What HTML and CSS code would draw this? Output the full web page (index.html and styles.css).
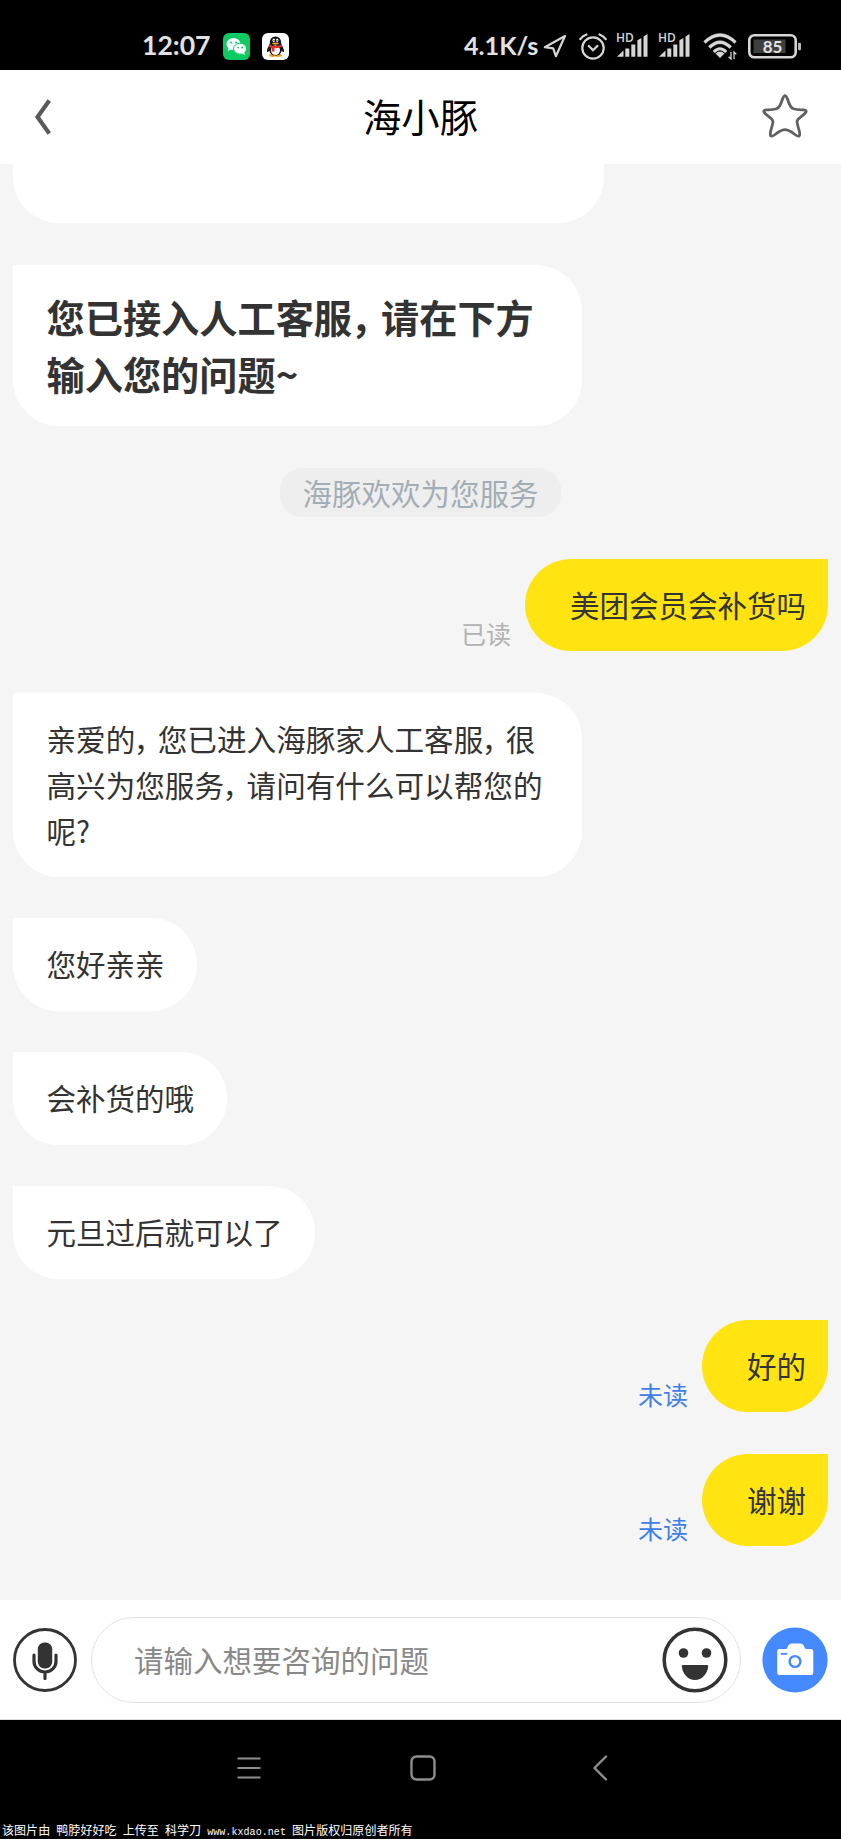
FILE: index.html
```html
<!DOCTYPE html>
<html lang="zh-CN">
<head>
<meta charset="utf-8">
<title>海小豚</title>
<link rel="stylesheet" href="styles.css">
</head>
<body>
<div class="phone">
  <div class="status">
    <span class="time">12:07</span>
    <svg class="app wechat" width="27" height="27" viewBox="0 0 27 27">
      <rect width="27" height="27" rx="6" fill="#0ccb62"/>
      <ellipse cx="10.500" cy="11" rx="7" ry="6" fill="#fff"/><path d="M5.500 14l-.5 4 4-2z" fill="#fff"/>
      <ellipse cx="17" cy="15.700" rx="6.500" ry="5.500" fill="#fff" stroke="#0ccb62"/><path d="M18 20l3.800 2-.6-3.500z" fill="#fff"/>
      <g fill="#0ccb62"><circle cx="8" cy="9.500" r="1"/><circle cx="13" cy="9.500" r="1"/><circle cx="15" cy="14.500" r=".9"/><circle cx="19.200" cy="14.500" r=".9"/></g>
    </svg>
    <svg class="app qq" width="27" height="27" viewBox="0 0 27 27">
      <rect width="27" height="27" rx="6" fill="#fff"/>
      <ellipse cx="10.500" cy="22.500" rx="3.500" ry="1.400" fill="#f0a51e"/><ellipse cx="16.500" cy="22.500" rx="3.500" ry="1.400" fill="#f0a51e"/>
      <path d="M13.500 3.500c-4 0-5.800 3-5.600 6.500 0 1.500-3.200 5.500-2.900 8.500.3 1.500 1.800-.3 2.300-1 .5 3 2.700 5 6.200 5s5.700-2 6.200-5c.5.700 2 2.500 2.300 1 .3-3-2.900-7-2.900-8.500.2-3.500-1.600-6.500-5.600-6.500z" fill="#161313"/>
      <ellipse cx="13.500" cy="17.300" rx="4.500" ry="4.800" fill="#fff"/>
      <path d="M7.500 11.500q6 3 12 0l.6 2.200q-3.500 1.800-7.600 1.600v3.200H9.800v-3.600l-3-1.200z" fill="#df3030"/>
      <ellipse cx="11.800" cy="7.300" rx="1.200" ry="1.700" fill="#fff"/><ellipse cx="15.200" cy="7.300" rx="1.200" ry="1.700" fill="#fff"/>
      <circle cx="12" cy="7.500" r=".6"/><circle cx="15" cy="7.500" r=".6"/><ellipse cx="13.500" cy="10.400" rx="3.300" ry="1" fill="#f0a51e"/>
    </svg>
    <span class="speed">4.1K/s</span>
    <svg class="ic loc" width="24" height="24" viewBox="0 0 24 24"><path d="M22 2L1.800 13.200l8.400 1.200 2.700 7.800z" fill="none" stroke="#d6d6d6" stroke-width="2.200" stroke-linejoin="round"/></svg>
    <svg class="ic alarm" width="28" height="27" viewBox="0 0 28 27"><g fill="none" stroke="#d6d6d6" stroke-width="2.200" stroke-linecap="round"><circle cx="14" cy="15" r="10.700"/><path d="M9.800 13l4.200 4.200 4.400-4.200M1.300 6.200Q3.600 2.800 7.500 1.500M26.700 6.200Q24.400 2.800 20.500 1.500"/></g></svg>
    <svg class="ic signal" width="34" height="28" viewBox="-1 -4 34 28"><text class="hd" x="0" y="9">HD</text><g fill="#d6d6d6"><path d="M1 23.700L7.500 17.500v6.200zM9.300 15.500h4v8.200h-4zM15.300 11.500h4v12.200h-4zM21.400 7.300l4-2.300v18.700h-4zM27.500 3.500l4-2.500v22.700h-4z"/></g></svg>
    <svg class="ic signal" width="34" height="28" viewBox="-1 -4 34 28"><text class="hd" x="0" y="9">HD</text><g fill="#d6d6d6"><path d="M1 23.700L7.500 17.500v6.200zM9.300 15.500h4v8.200h-4zM15.300 11.500h4v12.200h-4zM21.400 7.300l4-2.300v18.700h-4zM27.500 3.500l4-2.500v22.700h-4z"/></g></svg>
    <svg class="ic wifi" width="34" height="27" viewBox="0 0 34 27"><g fill="none" stroke="#d6d6d6" stroke-width="3.200"><path d="M1.500 9.500Q17-5.500 32.500 9.500M6.300 14.500Q17 4 27.700 14.500M10.800 19Q17 12.500 23.200 19"/></g><path d="M12.500 20.500q4.500-4 9 0L17 25z" fill="#d6d6d6"/><path d="M28 19v7l-2.300-2.300M31 26v-7l2.300 2.300" fill="none" stroke="#d6d6d6" stroke-width="1.300"/></svg>
    <svg class="ic battery" width="54" height="25" viewBox="0 0 54 25"><rect x="1.300" y="1.300" width="46.400" height="22" rx="5" fill="none" stroke="#d6d6d6" stroke-width="2.600"/><rect x="5.500" y="5.500" width="32" height="13.600" fill="#3e3e3e"/><rect x="50" y="8.700" width="3" height="7.500" rx="1.200" fill="#bbb"/><text class="pct" x="24.500" y="18.600" text-anchor="middle">85</text></svg>
  </div>

  <header class="header">
    <svg width="20" height="38" viewBox="0 0 20 38"><path d="M17.300 2.500L5.500 19l11.800 16.500" fill="none" stroke="#5a5a5a" stroke-width="4.200"/></svg>
    <h1 class="title">海小豚</h1>
    <svg class="star" width="48" height="46" viewBox="0 0 48 46"><path d="M24 2.500Q25.500 3 26.500 6Q29 14.500 32.500 15.800Q36 17 42.500 16.800Q45.500 17 45.200 18.500Q44.500 20.500 40.500 23.300Q36.500 26 36 28.500Q36.200 31 38.300 38Q39.200 42 38 43Q36.500 43.800 32 40Q27 36.600 24 36.600Q21 36.600 16 40Q11.500 43.800 10 43Q8.800 42 9.700 38Q11.800 31 12 28.500Q11.500 26 7.500 23.300Q3.500 20.500 2.800 18.500Q2.500 17 5.500 16.800Q12 17 15.500 15.800Q19 14.500 21.500 6Q22.500 3 24 2.500z" fill="none" stroke="#606060" stroke-width="2.800" stroke-linejoin="round"/></svg>
  </header>

  <main class="chat">
    <div class="bubble earlier"></div>
    <div class="bubble notice">您已接入人工客服<span class="comma">，</span>请在下方<br>输入您的问题~</div>
    <div class="agent">海豚欢欢为您服务</div>
    <div class="mine"><span class="receipt">已读</span><div class="bubble own">美团会员会补货吗</div></div>
    <div class="bubble long">亲爱的<span class="comma">，</span>您已进入海豚家人工客服<span class="comma">，</span>很<br>高兴为您服务<span class="comma">，</span>请问有什么可以帮您的<br>呢?</div>
    <div class="bubble">您好亲亲</div>
    <div class="bubble">会补货的哦</div>
    <div class="bubble">元旦过后就可以了</div>
    <div class="mine"><span class="receipt unread">未读</span><div class="bubble own">好的</div></div>
    <div class="mine"><span class="receipt unread">未读</span><div class="bubble own">谢谢</div></div>
  </main>

  <footer class="composer">
    <svg class="mic" width="64" height="64" viewBox="0 0 64 64"><circle cx="32" cy="32" r="30.500" fill="none" stroke="#333" stroke-width="2.800"/><rect x="24.800" y="14.500" width="14.400" height="26" rx="6.500" fill="#333"/><path d="M21 27v6.500a11 10.500 0 0 0 22 0V27M32 44v6.500" fill="none" stroke="#333" stroke-width="3.200" stroke-linecap="round"/></svg>
    <div class="field">
      <span class="hint">请输入想要咨询的问题</span>
      <svg width="66" height="66" viewBox="0 0 66 66"><circle cx="33" cy="33" r="30.800" fill="none" stroke="#333" stroke-width="3.500"/><g fill="#333"><circle cx="21.500" cy="26" r="4.800"/><circle cx="44.500" cy="26" r="4.800"/><path d="M20.800 38h24.400q1.200 0 1 1.500C45.400 47 40 53 33 53s-12.400-6-13.200-13.500q-.2-1.500 1-1.500z"/></g></svg>
    </div>
    <svg width="66" height="66" viewBox="0 0 66 66"><circle cx="33" cy="33" r="32.600" fill="#4489fd"/><path d="M17.500 22h7l2.200-4q.9-1.600 2.800-1.600h9q1.900 0 2.800 1.600l2.200 4h5.500q2.300 0 2.300 2.300v21.400q0 2.300-2.300 2.300H17.500q-2.300 0-2.300-2.300V24.300q0-2.300 2.300-2.300z" fill="#fff"/><circle cx="33" cy="34.500" r="5.400" fill="none" stroke="#4489fd" stroke-width="2.400"/><path d="M19.500 26.800h5" stroke="#4489fd" stroke-width="1.800" stroke-linecap="round"/></svg>
  </footer>

  <nav class="nav">
    <div class="keys">
      <svg width="26" height="26" viewBox="0 0 26 26"><path d="M1.500 3.500h23M1.500 13h23M1.500 22.500h23" stroke="#8e8e8e" stroke-width="2.200"/></svg>
      <svg class="home" width="26" height="26" viewBox="0 0 26 26"><rect x="1.500" y="1.500" width="23" height="23" rx="5" fill="none" stroke="#8e8e8e" stroke-width="2.400"/></svg>
      <svg class="back" width="16" height="26" viewBox="0 0 16 26"><path d="M14 1.500L2.500 13 14 24.500" fill="none" stroke="#8e8e8e" stroke-width="2.400" stroke-linecap="round" stroke-linejoin="round"/></svg>
    </div>
    <div class="credit"><span>该图片由</span> <span>鸭脖好好吃</span> <span>上传至</span> <span>科学刀</span> www.kxdao.net <span>图片版权归原创者所有</span></div>
  </nav>
</div>
</body>
</html>
```

FILE: styles.css
```css
* { box-sizing: border-box; }
body { margin: 0; font-family: "Noto Sans CJK SC", sans-serif; }
svg { display: block; flex: none; }

.phone { width: 841px; height: 1839px; display: flex; flex-direction: column; overflow: hidden; background: #f5f5f5; }

/* System status bar */
.status { flex: none; height: 70px; background: #000; display: flex; align-items: flex-start; padding: 33px 0 0 142px; color: #e2e2e2; }
.time, .speed { font: 700 26.600px/25px Lato, sans-serif; white-space: nowrap; }
.time { width: 81px; }
.speed { width: 79px; margin-left: 175px; font-size: 25.200px; }
.qq { margin-left: 12px; }
.loc { margin-top: 1px; }
.alarm { margin-left: 12px; }
.signal { margin: -4px 0 0 8px; }
.wifi { margin: 0 0 0 12px; }
.battery { margin: 1px 0 0 11px; }
.hd { font: 600 12px "Open Sans", sans-serif; fill: #d6d6d6; }
.pct { font: 700 17px Lato, sans-serif; fill: #e2e2e2; }

/* Title bar */
.header { flex: none; height: 94px; background: #fff; display: flex; align-items: center; justify-content: space-between; padding: 0 32px; }
.title { margin: 0 0 0 28px; padding-bottom: 3px; font-size: 38.300px; font-weight: 400; line-height: 56px; color: #000; }
.star { margin-bottom: 2px; }

/* Conversation */
.chat { flex: none; height: 1436px; padding: 0 13px; display: flex; flex-direction: column; align-items: flex-start; gap: 41.350px; overflow: hidden; }
.bubble { flex: none; padding: 22px 32.500px 24.300px 33.500px; background: #fff; border-radius: 0 46px 46px 46px; font-size: 29.500px; line-height: 46.200px; color: #333; white-space: nowrap; }
.earlier { width: 591px; height: 59.400px; border-radius: 0 0 46px 46px; }
.notice { width: 569px; height: 161.700px; padding-top: 23px; font-size: 38.200px; font-weight: 700; line-height: 57.600px; }
.long { width: 569px; padding: 23.200px 33px 23px 33.500px; font-size: 29.600px; line-height: 46.100px; }
.comma { margin: 0 1.500px 0 -1.500px; letter-spacing: -.24em; }
.agent { align-self: center; height: 49.600px; padding: 0 22.500px; border-radius: 22px; background: #eee; color: #a2adb5; font-size: 29.500px; line-height: 48.500px; }
.mine { align-self: flex-end; display: flex; align-items: flex-end; gap: 14px; }
.own { padding: 22px 22px 24.300px 45px; border-radius: 46px 0 46px 46px; background: #ffe411; }
.receipt { padding-bottom: 2.500px; font-size: 25px; line-height: 32px; color: #b2b2b2; }
.unread { color: #3f80e8; }

/* Message composer */
.composer { flex: none; height: 120px; background: #fff; border-bottom: 1px solid #ddd; display: flex; align-items: center; padding-left: 13px; }
.field { width: 650px; height: 86px; margin: 0 21px 0 14px; border: 1px solid #e2e2e2; border-radius: 43px; display: flex; align-items: center; justify-content: space-between; padding: 0 12px 0 42px; color: #888; font-size: 29.500px; }
.hint { padding-bottom: 2px; }

/* System navigation */
.nav { flex: 1; background: #000; display: flex; flex-direction: column; justify-content: space-between; padding-top: 35px; }
.keys { display: flex; padding-left: 236px; }
.home { margin-left: 148px; }
.back { margin-left: 156px; }
.credit { padding-left: 2px; height: 17px; font: 10px/15px "Liberation Mono", monospace; letter-spacing: .06px; color: #fff; white-space: nowrap; }
.credit span { font: 12px/15px "Noto Sans CJK SC", sans-serif; }
```
